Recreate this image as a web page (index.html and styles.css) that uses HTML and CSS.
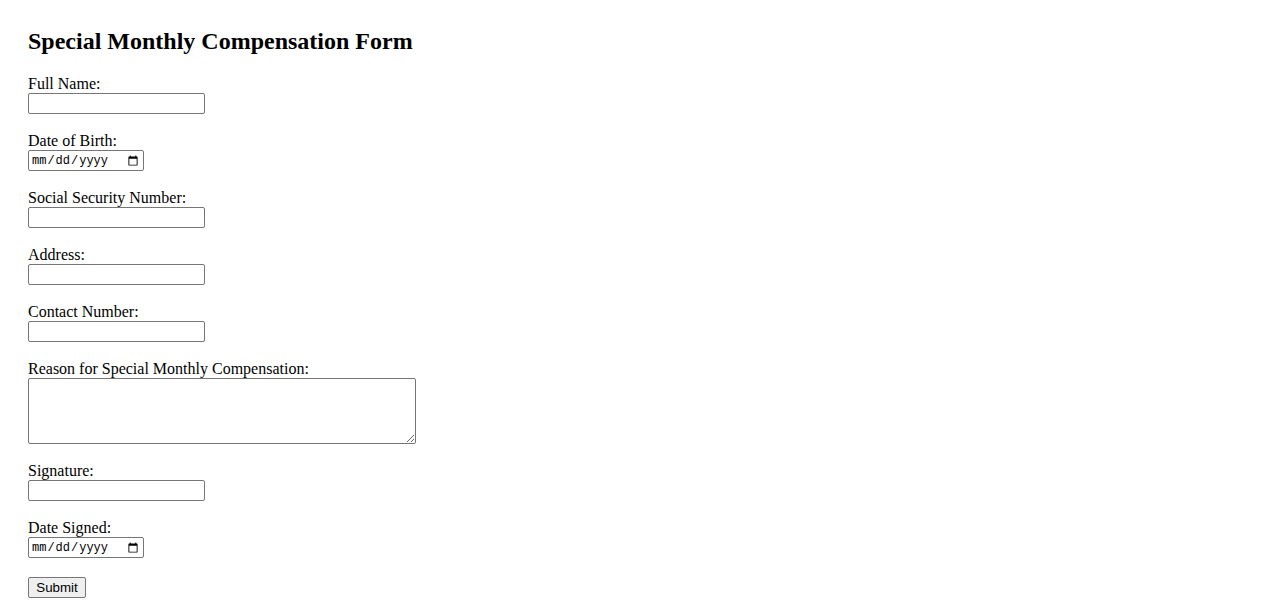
FILE: index.html
```html
<!DOCTYPE html>
<html lang="en">
<head>
<meta charset="utf-8">
<title>Special Monthly Compensation Form</title>
<link rel="stylesheet" href="styles.css">
</head>
<body>
<h2 class="title">Special Monthly Compensation Form</h2>
<form class="form">
<label class="label" for="name">Full Name:</label><br>
<input class="text" type="text" id="name"><br><br>
<label class="label" for="dob">Date of Birth:</label><br>
<input class="date" type="date" id="dob"><br><br>
<label class="label" for="ssn">Social Security Number:</label><br>
<input class="text" type="text" id="ssn"><br><br>
<label class="label" for="addr">Address:</label><br>
<input class="text" type="text" id="addr"><br><br>
<label class="label" for="phone">Contact Number:</label><br>
<input class="text" type="text" id="phone"><br><br>
<label class="label" for="reason">Reason for Special Monthly Compensation:</label><br>
<textarea class="area" id="reason"></textarea><br><br>
<label class="label" for="sig">Signature:</label><br>
<input class="text" type="text" id="sig"><br><br>
<label class="label" for="signed">Date Signed:</label><br>
<input class="date" type="date" id="signed"><br><br>
<input class="submit" type="submit" value="Submit">
</form>
</body>
</html>
```
FILE: styles.css
```css
html, body {
  background: #fff;
}
body {
  margin: 0;
  padding: 28px 28px 0 28px;
  font-family: "Liberation Serif", "Times New Roman", serif;
  font-size: 16px;
  color: #000;
}
.title {
  margin: 0 0 20px 0;
  font-size: 24px;
  font-weight: bold;
}
.form {
  margin: 0;
}
.text {
  box-sizing: border-box;
  width: 177px;
  height: 21px;
  border: 1px solid #767676;
  border-radius: 2px;
  padding: 1px 2px;
  font-family: Arial, "Liberation Sans", sans-serif;
  font-size: 13.333px;
  margin: 0;
}
.date {
  box-sizing: border-box;
  width: 116px;
  height: 21px;
  border: 1px solid #767676;
  border-radius: 2px;
  padding: 1px 2px;
  font-family: "Liberation Mono", "DejaVu Sans Mono", monospace;
  font-size: 12px;
  margin: 0;
  vertical-align: 1px;
}
.area {
  box-sizing: border-box;
  width: 388px;
  height: 66px;
  border: 1px solid #767676;
  border-radius: 2px;
  padding: 2px;
  margin: 0;
  vertical-align: bottom;
}
.submit {
  box-sizing: border-box;
  width: 58px;
  height: 21px;
  border: 1px solid #767676;
  border-radius: 2px;
  background: #efefef;
  font-family: Arial, "Liberation Sans", sans-serif;
  font-size: 13.333px;
  padding: 1px 6px;
  margin: 1px 0 0 0;
}
```
